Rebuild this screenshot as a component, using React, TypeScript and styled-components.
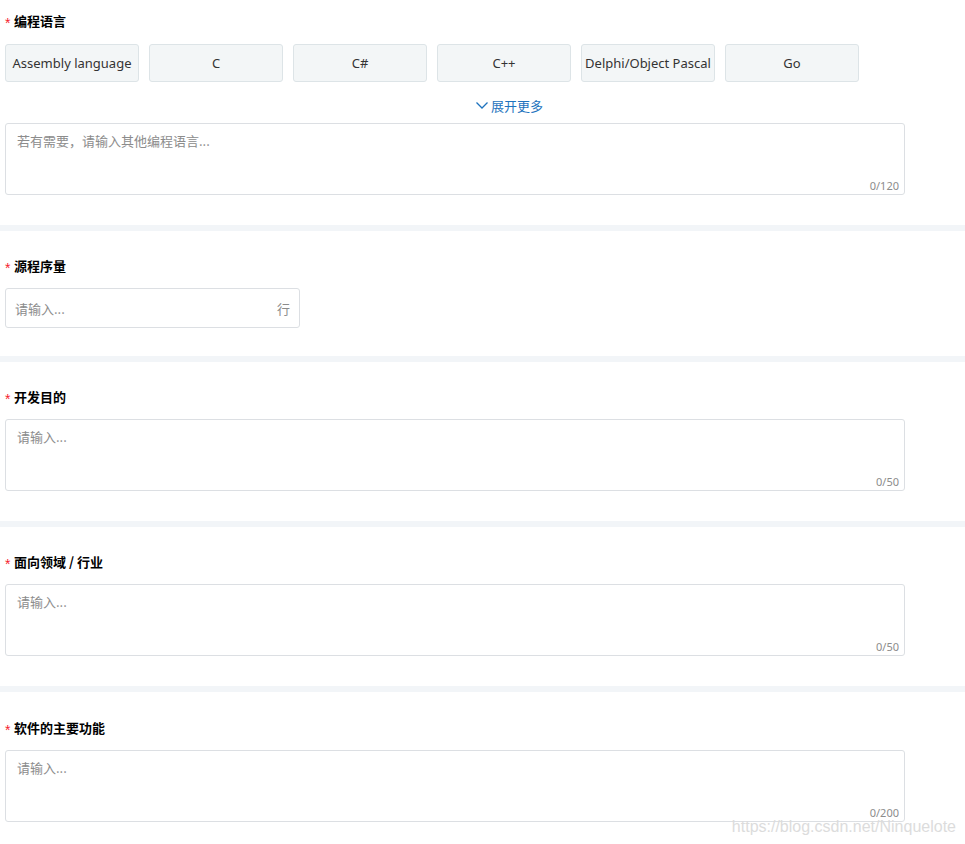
import React from "react";
import styled, { createGlobalStyle } from "styled-components";

const GlobalStyle = createGlobalStyle`
  html, body {
    margin: 0;
    padding: 0;
    background: #ffffff;
  }
  body {
    font-family: "Noto Sans", "Noto Sans CJK SC", sans-serif;
    color: #333333;
  }
`;

const Page = styled.div`
  position: relative;
  width: 965px;
  min-height: 844px;
  background: #ffffff;
`;

const Section = styled.section<{ $top?: number; $bottom?: number }>`
  padding: ${(p) => p.$top ?? 24}px 5px ${(p) => p.$bottom ?? 30}px;
`;

const Divider = styled.div`
  height: 6px;
  background: #f2f5f8;
`;

const Title = styled.div<{ $gap?: number }>`
  display: flex;
  align-items: center;
  height: 20px;
  margin-bottom: ${(p) => p.$gap ?? 13}px;
  font-family: "Noto Sans CJK SC", sans-serif;
  font-size: 13px;
  font-weight: 700;
  color: #000000;
`;

const Star = styled.span`
  color: #f5222d;
  font-family: "Liberation Sans", sans-serif;
  font-size: 14px;
  font-weight: 400;
  width: 9px;
  margin-top: 5px;
`;

const Options = styled.div`
  display: flex;
  gap: 10px;
`;

const Option = styled.button`
  width: 134px;
  height: 38px;
  padding: 0;
  border: 1px solid #dde4e7;
  border-radius: 3px;
  background: #f3f6f7;
  color: #333333;
  font-family: "Noto Sans", "Noto Sans CJK SC", sans-serif;
  font-size: 13px;
  white-space: nowrap;
  cursor: pointer;
`;

const MoreRow = styled.div`
  display: flex;
  height: 20px;
  margin-top: 13px;
  margin-bottom: 8px;
  padding-left: 470px;
`;

const MoreLink = styled.a`
  display: flex;
  align-items: center;
  gap: 2px;
  color: #1e73be;
  font-family: "Noto Sans CJK SC", sans-serif;
  font-size: 13px;
  cursor: pointer;
`;

const AreaWrap = styled.div`
  position: relative;
  width: 900px;
  height: 72px;
`;

const Area = styled.textarea`
  display: block;
  box-sizing: border-box;
  width: 100%;
  height: 100%;
  padding: 7px 11px;
  border: 1px solid #dcdfe3;
  border-radius: 3px;
  resize: none;
  outline: none;
  font-family: "Noto Sans CJK SC", sans-serif;
  font-size: 13px;
  line-height: 20px;
  color: #333333;
  &::placeholder {
    color: #8c8c8c;
  }
`;

const Counter = styled.span`
  position: absolute;
  right: 6px;
  bottom: 2px;
  font-family: "Noto Sans", sans-serif;
  font-size: 11px;
  color: #8c8c8c;
`;

const InputWrap = styled.div`
  box-sizing: border-box;
  display: flex;
  align-items: center;
  width: 295px;
  height: 40px;
  padding: 0 9px 0 9px;
  border: 1px solid #dcdfe3;
  border-radius: 3px;
`;

const Input = styled.input`
  flex: 1;
  min-width: 0;
  border: none;
  outline: none;
  padding: 0;
  font-family: "Noto Sans CJK SC", sans-serif;
  font-size: 13px;
  color: #333333;
  &::placeholder {
    color: #8c8c8c;
  }
`;

const Suffix = styled.span`
  font-family: "Noto Sans CJK SC", sans-serif;
  font-size: 13px;
  color: #8c8c8c;
`;

const Watermark = styled.div`
  position: absolute;
  right: 9px;
  top: 818px;
  font-family: "Liberation Sans", Arial, sans-serif;
  font-size: 16px;
  line-height: 18px;
  color: #dcdcdc;
  pointer-events: none;
`;

const languages = ["Assembly language", "C", "C#", "C++", "Delphi/Object Pascal", "Go"];

const Chevron = () => (
  <svg width="14" height="14" viewBox="0 0 14 14" fill="none">
    <path d="M1.5 4.5 L7 10 L12.5 4.5" stroke="#1e73be" strokeWidth="1.3" />
  </svg>
);

const FieldTitle = ({ children, gap }: { children: React.ReactNode; gap?: number }) => (
  <Title $gap={gap}>
    <Star>*</Star>
    {children}
  </Title>
);

const TextBox = ({ placeholder, max }: { placeholder: string; max: number }) => (
  <AreaWrap>
    <Area placeholder={placeholder} />
    <Counter>0/{max}</Counter>
  </AreaWrap>
);

const App = () => {
  return (
    <Page>
      <GlobalStyle />
      <Section $top={10}>
        <FieldTitle gap={14}>编程语言</FieldTitle>
        <Options>
          {languages.map((lang) => (
            <Option key={lang}>{lang}</Option>
          ))}
        </Options>
        <MoreRow>
          <MoreLink>
            <Chevron />
            展开更多
          </MoreLink>
        </MoreRow>
        <TextBox placeholder="若有需要，请输入其他编程语言..." max={120} />
      </Section>
      <Divider />
      <Section $bottom={28}>
        <FieldTitle>源程序量</FieldTitle>
        <InputWrap>
          <Input placeholder="请输入..." />
          <Suffix>行</Suffix>
        </InputWrap>
      </Section>
      <Divider />
      <Section>
        <FieldTitle>开发目的</FieldTitle>
        <TextBox placeholder="请输入..." max={50} />
      </Section>
      <Divider />
      <Section>
        <FieldTitle>面向领域 / 行业</FieldTitle>
        <TextBox placeholder="请输入..." max={50} />
      </Section>
      <Divider />
      <Section $top={25}>
        <FieldTitle>软件的主要功能</FieldTitle>
        <TextBox placeholder="请输入..." max={200} />
      </Section>
      <Watermark>https://blog.csdn.net/Ninquelote</Watermark>
    </Page>
  );
};

export default App;
